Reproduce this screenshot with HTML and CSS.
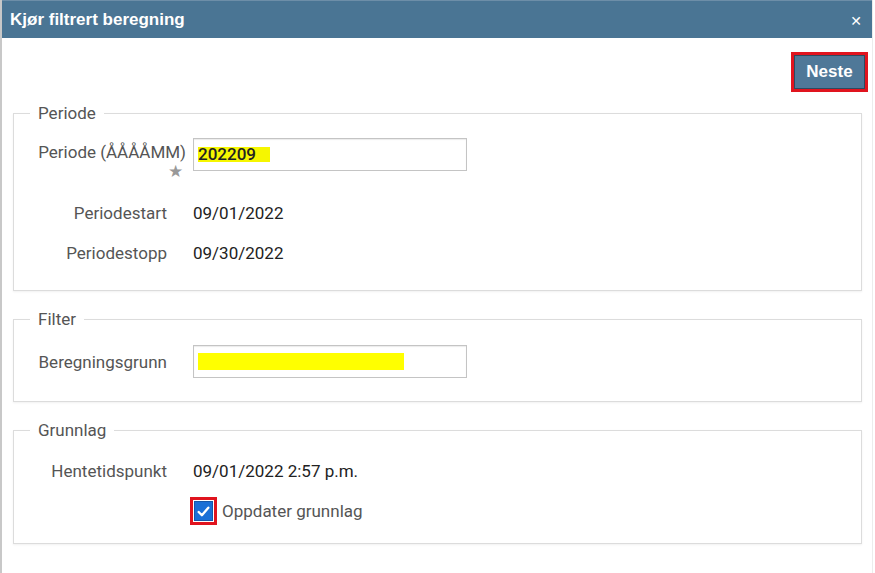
FILE: index.html
```html
<!DOCTYPE html>
<html lang="no">
<head>
    <meta charset="UTF-8">
    <title>Kjør filtrert beregning</title>
    <link rel="stylesheet" href="styles.css">
</head>
<body>

    <div class="dialog">
        <div class="titlebar">
            <span class="title">Kjør filtrert beregning</span>
            <span class="close">&#x2715;</span>
        </div>

        <div class="content">
            <div class="toolbar">
                <span class="mark-box"><button class="btn-next">Neste</button></span>
            </div>

            <fieldset class="group group-periode">
                <legend>Periode</legend>
                <div class="form">
                    <div class="label label-top">Periode (ÅÅÅÅMM)<br><span class="star">&#9733;</span></div>
                    <div class="field"><span class="text-input"><span class="hl">202209</span></span></div>
                    <div class="label">Periodestart</div>
                    <div class="value">09/01/2022</div>
                    <div class="label">Periodestopp</div>
                    <div class="value">09/30/2022</div>
                </div>
            </fieldset>

            <fieldset class="group group-filter">
                <legend>Filter</legend>
                <div class="form">
                    <div class="label label-mid">Beregningsgrunn</div>
                    <div class="field"><span class="text-input"><span class="hl-bar"></span></span></div>
                </div>
            </fieldset>

            <fieldset class="group group-grunnlag">
                <legend>Grunnlag</legend>
                <div class="form">
                    <div class="label">Hentetidspunkt</div>
                    <div class="value">09/01/2022 2:57 p.m.</div>
                    <div></div>
                    <div class="check-row">
                        <span class="check-mark">
                            <span class="check">
                                <svg width="15" height="15" viewBox="0 0 14 14"><path d="M2.5 7.5 L5.5 10.5 L11.5 3.5" fill="none" stroke="#fff" stroke-width="2.2" stroke-linecap="round" stroke-linejoin="round"/></svg>
                            </span>
                        </span>
                        <span class="check-label">Oppdater grunnlag</span>
                    </div>
                </div>
            </fieldset>
        </div>
    </div>

</body>
</html>
```

FILE: styles.css
```css
body {
    margin: 0;
    padding: 0;
    background-color: #fff;
    font-family: Roboto, "Liberation Sans", Arial, sans-serif;
    font-size: 17px;
    color: #333;
}

.dialog {
    height: 573px;
    box-sizing: border-box;
    border-left: 2px solid #c8c8c8;
    border-right: 1px solid #ececec;
    margin-right: 2px;
}

.titlebar {
    height: 38px;
    background-color: #4a7594;
    border-top: 1px solid #6d8ea8;
    box-sizing: border-box;
    display: flex;
    align-items: center;
    justify-content: space-between;
    padding: 0 10px 0 8px;
    color: #fff;
}

.title {
    font-family: "Liberation Sans", Arial, sans-serif;
    font-weight: bold;
    font-size: 17px;
}

.close {
    font-family: "DejaVu Sans", sans-serif;
    font-weight: bold;
    font-size: 14px;
    margin-top: 2px;
}

.content {
    padding: 0 10px 0 11px;
}

.toolbar {
    display: flex;
    justify-content: flex-end;
    margin: 14px -6px 11px 0;
}

.mark-box {
    display: inline-block;
    border: 3px solid #e0141e;
}

.btn-next {
    display: block;
    width: 71px;
    height: 34px;
    background-color: #4f7898;
    border: 1px solid #2d4a60;
    color: #fff;
    font-family: "Liberation Sans", Arial, sans-serif;
    font-weight: bold;
    font-size: 17px;
    padding: 0;
}

.group {
    margin: 0 0 18px 0;
    padding: 0 16px;
    border: 1px solid #dcdcdc;
    box-shadow: 0 1px 2px rgba(0, 0, 0, 0.06);
}

.group legend {
    padding: 0 8px;
    color: #555;
    font-size: 17px;
    line-height: 20px;
}

.form {
    display: grid;
    grid-template-columns: 156px 274px;
    column-gap: 7px;
    row-gap: 20px;
    align-items: start;
}

.label {
    text-align: right;
    color: #555;
    line-height: 20px;
    padding-right: 19px;
}

.label-top {
    padding-top: 5px;
    padding-right: 0;
    line-height: 19px;
    white-space: nowrap;
}

.label-mid {
    padding-top: 7px;
}

.star {
    color: #999;
    font-size: 17px;
    margin-right: 3px;
}

.value {
    color: #222;
    line-height: 20px;
}

.text-input {
    display: flex;
    align-items: center;
    height: 33px;
    box-sizing: border-box;
    border: 1px solid #c4c4c4;
    box-shadow: inset 0 1px 1px rgba(0, 0, 0, 0.08);
    padding-left: 4px;
    background-color: #fff;
}

.hl {
    background-color: #f6f600;
    color: #222;
    font-weight: 500;
    padding-right: 14px;
    line-height: 15px;
}

.hl-bar {
    display: block;
    width: 206px;
    height: 17px;
    background-color: #ffff00;
}

.group-periode {
    padding-top: 15px;
    padding-bottom: 27px;
}

.group-periode .form {
    grid-template-rows: 45px 20px 20px;
}

.group-filter {
    padding-top: 16px;
    padding-bottom: 23px;
}

.group-grunnlag {
    padding-top: 21px;
    padding-bottom: 22px;
}

.check-row {
    display: flex;
    align-items: center;
    margin-left: -3px;
    height: 20px;
}

.check-mark {
    display: inline-block;
    border: 3px solid #e0141e;
    padding: 1px;
    background-color: #fff;
}

.check {
    display: flex;
    align-items: center;
    justify-content: center;
    width: 19px;
    height: 20px;
    background-color: #1a6fd6;
    border: 1px solid #1557a8;
    box-sizing: border-box;
}

.check-label {
    margin-left: 5px;
    color: #555;
}
```
